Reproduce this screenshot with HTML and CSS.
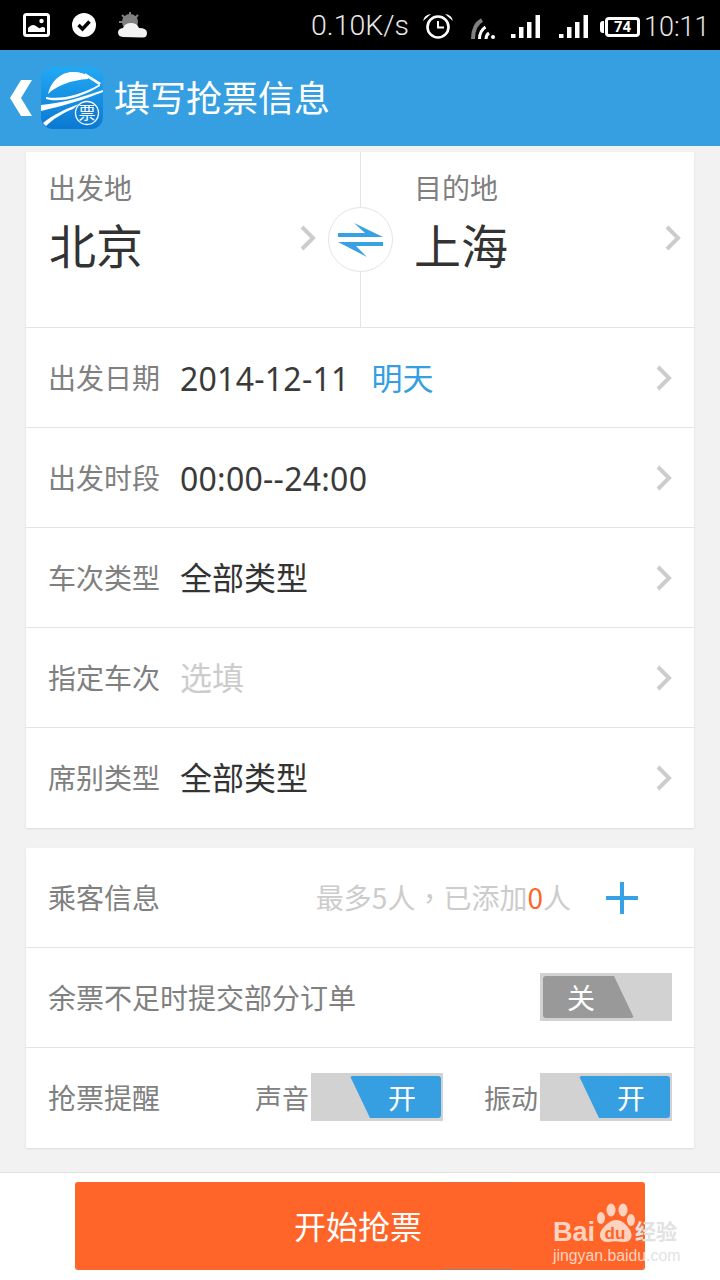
FILE: index.html
```html
<!DOCTYPE html>
<html lang="zh-CN">
<head>
<meta charset="utf-8">
<title>填写抢票信息</title>
<link rel="stylesheet" href="styles.css">
</head>
<body>
<div class="screen">
  <div class="status">
    <div class="status-left">
      <svg class="ic" width="27" height="24" viewBox="0 0 27 24"><rect x="1.500" y="1.500" width="24" height="21" rx="2" fill="none" stroke="#fff" stroke-width="3"/><path d="M5 19v-4q4-5 8-2t4 2q3-2 5 0v4z" fill="#fff"/><circle cx="18.500" cy="8" r="2.200" fill="#fff"/></svg>
      <svg class="ic" width="24" height="24" viewBox="0 0 24 24"><circle cx="12" cy="12" r="12" fill="#fff"/><path d="M6.500 12l4 4 7-7.500" fill="none" stroke="#000" stroke-width="3.400"/></svg>
      <svg class="ic" width="29" height="26" viewBox="0 0 29 26"><circle cx="12" cy="10" r="8" fill="#808080"/><path d="M12 0v4M4 3l3 3M20 3l-3 3M1 10h4" stroke="#808080" stroke-width="2"/><path d="M5 25q-5-.5-5-4.500t5-4.500q2-5 8-5t8 5q8 0 8 5t-5 4.500z" fill="#f2f2f2"/></svg>
    </div>
    <div class="status-right">
      <span class="speed">0.10K/s</span>
      <svg class="ic alarm" width="30" height="26" viewBox="0 0 30 26"><circle cx="15" cy="14" r="10.500" fill="none" stroke="#fff" stroke-width="2.600"/><path d="M15 8v6.500h6" fill="none" stroke="#fff" stroke-width="2"/><path d="M0 8q1-6 8-7zM30 8q-1-6-8-7z" fill="#fff"/></svg>
      <svg class="ic wifi" width="24" height="24" viewBox="0 0 24 24"><path d="M2 24q0-14 9-19" fill="none" stroke="#808080" stroke-width="4"/><path d="M8.500 24q0-8 6-12" fill="none" stroke="#fff" stroke-width="3"/><path d="M15 24q0-4 3-6" fill="none" stroke="#fff" stroke-width="3"/><circle cx="22" cy="22" r="2" fill="#fff"/></svg>
      <svg class="ic sig sig-first" width="29" height="24" viewBox="0 0 29 24"><path d="M0 19h4.500v4H0zM8 12h4.500v11H8zM16 7h4.500v16H16zM24.500 0H29v23h-4.500z" fill="#fff"/></svg>
      <svg class="ic sig" width="29" height="24" viewBox="0 0 29 24"><path d="M0 19h4.500v4H0zM8 12h4.500v11H8zM16 7h4.500v16H16zM24.500 0H29v23h-4.500z" fill="#fff"/></svg>
      <span class="battery"><span class="battery-level">74</span></span>
      <span class="clock">10:11</span>
    </div>
  </div>

  <header class="appbar">
    <svg class="back" width="24" height="38" viewBox="0 0 24 38"><path d="M12 1h11L12 19l11 18H12L1 19z" fill="#fff"/></svg>
    <svg class="logo" width="62" height="62" viewBox="0 0 62 62">
      <defs><linearGradient id="lg" x1="0" y1="0" x2="0" y2="1"><stop offset="0" stop-color="#22a9f5"/><stop offset="1" stop-color="#0b78d2"/></linearGradient></defs>
      <rect width="62" height="62" rx="12" fill="url(#lg)"/>
      <path d="M7 27C10 13 22 4 33 5C39 5 44 7 48 9L47 12C30 13 15 19 7 27Z" fill="#fff"/>
      <path d="M44 6L60 16 58 18 44 9Z" fill="#fff"/>
      <path d="M5 30C20 33 40 28 59 17L59 19C40 31 18 36 5 32Z" fill="#fff"/>
      <path d="M0 38C22 36 42 30 62 23L62 25C42 33 25 38 0 44Z" fill="#fff"/>
      <path d="M2 56C12 48 24 42 38 37L32 42C22 46 12 52 5 59Z" fill="#fff"/>
      <circle cx="46" cy="46" r="11.500" fill="#0f7fd6" stroke="#fff" stroke-width="1.300"/>
      <text x="46" y="52" class="logo-text">票</text>
    </svg>
    <h1 class="title">填写抢票信息</h1>
  </header>

  <main class="content">
    <section class="card">
      <div class="route">
        <div class="route-cell">
          <div class="route-label">出发地</div>
          <div class="route-city">北京</div>
          <svg class="chev route-chev" width="16" height="26" viewBox="0 0 16 26"><path d="M2 2l11 11L2 24" fill="none" stroke="#ccc" stroke-width="4"/></svg>
        </div>
        <div class="route-cell route-cell-end">
          <div class="route-label">目的地</div>
          <div class="route-city">上海</div>
          <svg class="chev route-chev" width="16" height="26" viewBox="0 0 16 26"><path d="M2 2l11 11L2 24" fill="none" stroke="#ccc" stroke-width="4"/></svg>
        </div>
        <div class="swap">
          <svg width="46" height="36" viewBox="0 0 46 36"><path d="M16 1L45 15H0V11H27ZM0 20H45V24H18L29 35Z" fill="#38a0e4"/></svg>
        </div>
      </div>
      <div class="row"><span class="label">出发日期</span><span class="value value-num">2014-12-11</span><span class="tag">明天</span><svg class="chev" width="16" height="26" viewBox="0 0 16 26"><path d="M2 2l11 11L2 24" fill="none" stroke="#ccc" stroke-width="4"/></svg></div>
      <div class="row"><span class="label">出发时段</span><span class="value value-num">00:00--24:00</span><svg class="chev" width="16" height="26" viewBox="0 0 16 26"><path d="M2 2l11 11L2 24" fill="none" stroke="#ccc" stroke-width="4"/></svg></div>
      <div class="row"><span class="label">车次类型</span><span class="value">全部类型</span><svg class="chev" width="16" height="26" viewBox="0 0 16 26"><path d="M2 2l11 11L2 24" fill="none" stroke="#ccc" stroke-width="4"/></svg></div>
      <div class="row"><span class="label">指定车次</span><span class="value placeholder">选填</span><svg class="chev" width="16" height="26" viewBox="0 0 16 26"><path d="M2 2l11 11L2 24" fill="none" stroke="#ccc" stroke-width="4"/></svg></div>
      <div class="row"><span class="label">席别类型</span><span class="value">全部类型</span><svg class="chev" width="16" height="26" viewBox="0 0 16 26"><path d="M2 2l11 11L2 24" fill="none" stroke="#ccc" stroke-width="4"/></svg></div>
    </section>

    <section class="card">
      <div class="row"><span class="label">乘客信息</span><span class="hint">最多5人<span class="comma" lang="zh-TW">，</span>已添加<em class="count">0</em>人</span>
        <svg class="plus" width="32" height="32" viewBox="0 0 32 32"><path d="M14 0h4v14h14v4H18v14h-4V18H0v-4h14z" fill="#38a0e4"/></svg>
      </div>
      <div class="row"><span class="label">余票不足时提交部分订单</span>
        <span class="toggle toggle-off"><span class="knob">关</span></span>
      </div>
      <div class="row"><span class="label">抢票提醒</span>
        <div class="alerts">
          <span class="label alert-name">声音</span><span class="toggle toggle-on"><span class="knob">开</span></span>
          <span class="label alert-name alert-second">振动</span><span class="toggle toggle-on"><span class="knob">开</span></span>
        </div>
      </div>
    </section>
  </main>

  <footer class="footer">
    <button class="start">开始抢票</button>
    <div class="watermark">
      <span class="wm-bai">Bai</span>
      <svg class="paw" width="42" height="42" viewBox="0 0 42 42"><g fill="#ffd3c0"><ellipse cx="7" cy="15" rx="4" ry="6"/><ellipse cx="17" cy="7" rx="4.500" ry="6.500"/><ellipse cx="29" cy="7" rx="4.500" ry="6.500"/><ellipse cx="37" cy="17" rx="4" ry="6"/><path d="M22 17c6 0 11 5 14 10 4 7 0 13-8 12-4-1-9-1-13 0-8 1-11-6-8-11 3-5 9-11 15-11z"/></g><text x="21" y="36" class="wm-du">du</text></svg>
      <span class="wm-jy">经验</span>
      <div class="wm-url">jingyan.baidu.<span class="wm-com">com</span></div>
    </div>
  </footer>
</div>
</body>
</html>
```
FILE: styles.css
```css
* { box-sizing: border-box; }
html, body { margin: 0; padding: 0; }
body { font-family: "Noto Sans CJK SC", "Noto Sans", sans-serif; background: #f2f2f2; }
.screen { width: 720px; height: 1280px; display: flex; flex-direction: column; overflow: hidden; position: relative; }

.status { height: 50px; background: #000; color: #e8e8e8; display: flex; align-items: center; justify-content: space-between; padding: 0 12px 0 23px; flex: none; }
.status-left { display: flex; align-items: center; gap: 22px; }
.status-right { display: flex; align-items: center; }
.ic { display: block; }
.speed { font-family: "Roboto", sans-serif; font-size: 28.5px; font-weight: 300; width: 98px; margin-right: 14px; white-space: nowrap; margin-top: 1px; }
.alarm { margin-right: 18px; margin-top: 2px; }
.wifi { margin-right: 16px; margin-top: 4px; }
.sig { margin-right: 17px; margin-top: 3px; }
.sig-first { margin-right: 19px; }
.battery { width: 35px; height: 20px; border: 3px solid #fff; border-radius: 4px; margin-right: 4px; margin-top: 4px; display: flex; align-items: center; justify-content: center; position: relative; }
.battery::before { content: ""; position: absolute; left: -8px; top: 1px; width: 4px; height: 12px; background: #fff; border-radius: 3px 0 0 3px; }
.battery-level { color: #fff; font: 700 15px/14px "Roboto", sans-serif; }
.clock { font-family: "Roboto", sans-serif; font-size: 27px; font-weight: 300; width: 64px; margin-top: 3px; }

.appbar { height: 96px; background: #359fe2; display: flex; align-items: center; padding-left: 9px; flex: none; }
.back { margin-right: 8px; }
.logo { margin-right: 11px; }
.logo-text { font-size: 17px; fill: #fff; text-anchor: middle; }
.title { margin: 0 0 4px; font-size: 36px; font-weight: 400; color: #fff; line-height: 1; }

.content { flex: 1; padding: 6px 26px 0; display: flex; flex-direction: column; gap: 20px; }
.card { background: #fff; box-shadow: 0 1px 2px #ddd; }

.route { height: 176px; display: flex; position: relative; border-bottom: 1px solid #e4e4e4; }
.route-cell { width: 334px; flex: none; padding: 16px 0 0 22px; position: relative; }
.route-cell .route-chev { position: absolute; right: 44px; top: 73px; }
.route-cell-end { border-left: 1px solid #e4e4e4; padding-left: 53px; }
.route-cell-end .route-chev { right: 13px; }
.route-label { font-size: 28px; line-height: 38px; color: #808080; }
.route-city { font-size: 47px; line-height: 60px; color: #333; margin: 8px 0 0 1px; }
.route-cell-end .route-city { margin-left: 0; }
.chev { flex: none; }
.swap { position: absolute; left: 302px; top: 55px; width: 65px; height: 65px; border-radius: 50%; background: #fff; border: 1px solid #e4e4e4; display: flex; align-items: center; justify-content: center; }

.row { height: 100px; display: flex; align-items: center; padding: 0 22px 1px 22px; border-bottom: 1px solid #e4e4e4; }
.row:last-child { border-bottom: 0; padding-bottom: 2px; }
.label { font-size: 28px; color: #808080; white-space: nowrap; }
.value { font-family: "Noto Sans", "Noto Sans CJK SC", sans-serif; font-size: 32px; color: #333; margin: 0 0 2px 20px; white-space: nowrap; }
.value-num { margin: 2px 0 0 20px; letter-spacing: .25px; color: #3a3a3a; }
.placeholder { color: #ccc; }
.tag { font-size: 31px; color: #359fe2; margin: 0 0 2px 22px; }
.row > .chev { margin-left: auto; margin-top: 2px; }

.hint { margin-left: auto; margin-right: 35px; font-size: 28px; color: #ccc; white-space: nowrap; }
.comma { font-family: "Noto Sans CJK TC", sans-serif; }
.count { font-style: normal; color: #ff6429; }
.plus { margin-right: 34px; margin-top: 2px; }

.toggle { display: block; width: 132px; height: 48px; background: #d2d2d2; padding: 3px; position: relative; flex: none; }
.row > .toggle { margin-left: auto; }
.knob { position: absolute; top: 3px; bottom: 6px; height: 42px; color: #fff; font-size: 28px; line-height: 42px; border-radius: 3px; }
.toggle-off .knob { left: 3px; width: 91px; background: #999; clip-path: polygon(0 0, 71px 0, 91px 100%, 0 100%); padding-left: 24px; }
.toggle-on .knob { right: 2px; width: 91px; background: #359fe2; clip-path: polygon(0 0, 100% 0, 100% 100%, 20px 100%); padding-left: 38px; }
.alerts { margin-left: auto; display: flex; align-items: center; }
.alert-name { font-size: 27px; margin-right: 2px; }
.alert-second { margin-left: 41px; }

.footer { height: 108px; background: #fff; border-top: 1px solid #e0e0e0; padding: 9px 0 0 75px; flex: none; position: relative; }
.start { display: block; width: 570px; height: 88px; border: 0; border-radius: 3px; background: #ff6429; color: #fff; font: 400 32px "Noto Sans CJK SC", sans-serif; padding: 0 4px 2px 0; position: relative; }
.start::after { content: ""; position: absolute; left: 368px; width: 69px; top: 0; bottom: 0; border-top: 1px solid #e8693a; border-bottom: 1px solid #a08070; }
.watermark { position: absolute; left: 553px; top: 0; width: 130px; height: 108px; }
.wm-bai { position: absolute; left: 0; top: 44px; font: 700 27px/30px "Liberation Sans", sans-serif; color: #ffd3c0; }
.paw { position: absolute; left: 41px; top: 30px; }
.wm-du { font: 700 17px "Liberation Sans", sans-serif; fill: #ff6429; text-anchor: middle; }
.wm-jy { position: absolute; left: 82px; top: 42px; font: 700 21px/30px "Noto Sans CJK SC", sans-serif; color: #e2e2e2; white-space: nowrap; }
.wm-url { position: absolute; left: 0; top: 74px; font: 400 15.800px/18px "Liberation Sans", sans-serif; color: #ffd3c0; white-space: nowrap; }
.wm-com { color: #e2e2e2; }
```
